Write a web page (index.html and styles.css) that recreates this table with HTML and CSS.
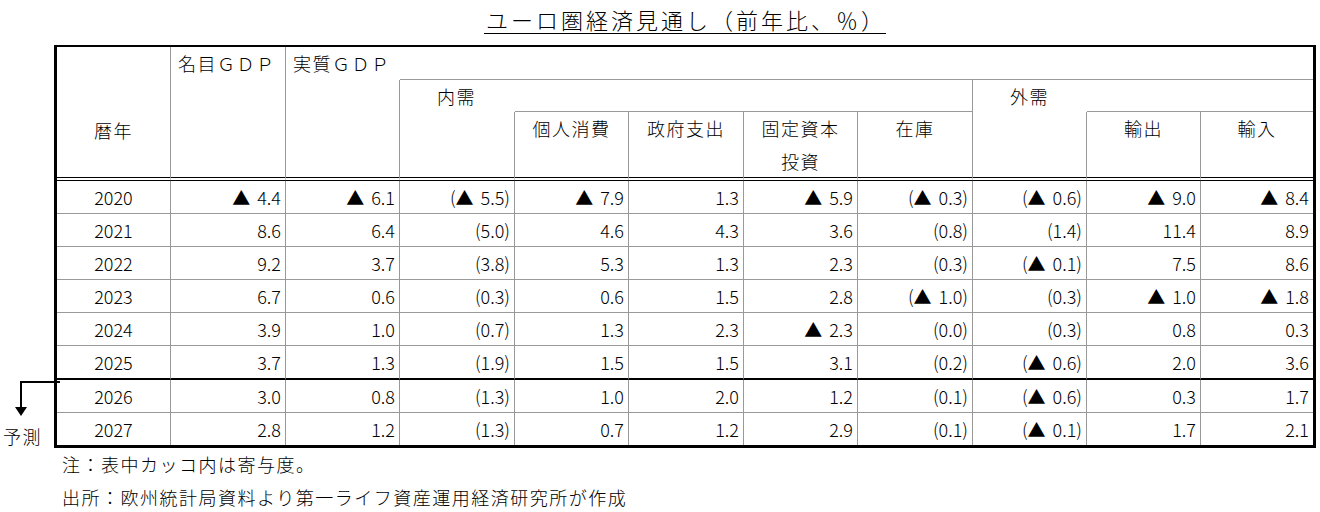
FILE: index.html
```html
<!DOCTYPE html>
<html lang="ja">
<head>
<meta charset="utf-8">
<title>ユーロ圏経済見通し</title>
<link rel="stylesheet" href="styles.css">
</head>
<body>
<div class="sheet">
  <div class="title-row"><h1 class="title">ユーロ圏経済見通し（前年比、％）</h1></div>
  <table class="outlook">
    <colgroup>
      <col class="w114"><col class="w115"><col class="w114"><col class="w115"><col class="w114"><col class="w115"><col class="w114"><col class="w115"><col class="w114"><col class="w114"><col class="w112">
    </colgroup>
    <thead>
      <tr class="r1">
        <th rowspan="3" class="year-head dbl">暦年</th>
        <th rowspan="3" class="top-left dbl">名目ＧＤＰ</th>
        <th class="top-left open">実質ＧＤＰ</th>
        <th colspan="8" class="end"></th>
      </tr>
      <tr class="r2">
        <th rowspan="2" class="dbl"></th>
        <th class="indent open">内需</th>
        <th colspan="4"></th>
        <th class="indent open">外需</th>
        <th colspan="2" class="end"></th>
      </tr>
      <tr class="r3">
        <th class="dbl"></th>
        <th class="dbl">個人消費</th>
        <th class="dbl">政府支出</th>
        <th class="dbl">固定資本<br>投資</th>
        <th class="dbl">在庫</th>
        <th class="dbl"></th>
        <th class="dbl">輸出</th>
        <th class="dbl end">輸入</th>
      </tr>
    </thead>
    <tbody>
      <tr><td class="yr">2020</td><td>▲ 4.4</td><td>▲ 6.1</td><td>(▲ 5.5)</td><td>▲ 7.9</td><td>1.3</td><td>▲ 5.9</td><td>(▲ 0.3)</td><td>(▲ 0.6)</td><td>▲ 9.0</td><td class="end">▲ 8.4</td></tr>
      <tr><td class="yr">2021</td><td>8.6</td><td>6.4</td><td>(5.0)</td><td>4.6</td><td>4.3</td><td>3.6</td><td>(0.8)</td><td>(1.4)</td><td>11.4</td><td class="end">8.9</td></tr>
      <tr><td class="yr">2022</td><td>9.2</td><td>3.7</td><td>(3.8)</td><td>5.3</td><td>1.3</td><td>2.3</td><td>(0.3)</td><td>(▲ 0.1)</td><td>7.5</td><td class="end">8.6</td></tr>
      <tr><td class="yr">2023</td><td>6.7</td><td>0.6</td><td>(0.3)</td><td>0.6</td><td>1.5</td><td>2.8</td><td>(▲ 1.0)</td><td>(0.3)</td><td>▲ 1.0</td><td class="end">▲ 1.8</td></tr>
      <tr><td class="yr">2024</td><td>3.9</td><td>1.0</td><td>(0.7)</td><td>1.3</td><td>2.3</td><td>▲ 2.3</td><td>(0.0)</td><td>(0.3)</td><td>0.8</td><td class="end">0.3</td></tr>
      <tr class="split"><td class="yr">2025</td><td>3.7</td><td>1.3</td><td>(1.9)</td><td>1.5</td><td>1.5</td><td>3.1</td><td>(0.2)</td><td>(▲ 0.6)</td><td>2.0</td><td class="end">3.6</td></tr>
      <tr><td class="yr">2026</td><td>3.0</td><td>0.8</td><td>(1.3)</td><td>1.0</td><td>2.0</td><td>1.2</td><td>(0.1)</td><td>(▲ 0.6)</td><td>0.3</td><td class="end">1.7</td></tr>
      <tr class="last"><td class="yr">2027</td><td>2.8</td><td>1.2</td><td>(1.3)</td><td>0.7</td><td>1.2</td><td>2.9</td><td>(0.1)</td><td>(▲ 0.1)</td><td>1.7</td><td class="end">2.1</td></tr>
    </tbody>
  </table>
  <div class="notes">
    <p>注：表中カッコ内は寄与度。</p>
    <p>出所：欧州統計局資料より第一ライフ資産運用経済研究所が作成</p>
  </div>
  <svg class="forecast-arrow" width="46" height="42" viewBox="0 0 46 42" aria-hidden="true">
    <line x1="6" y1="4" x2="46" y2="4" stroke="#000" stroke-width="2"/>
    <line x1="7" y1="3" x2="7" y2="30" stroke="#000" stroke-width="2"/>
    <polygon points="1,29 13,29 7,38" fill="#000"/>
  </svg>
  <span class="forecast-label">予測</span>
</div>
</body>
</html>
```

FILE: styles.css
```css
body {
  margin: 0;
  background: #fff;
  color: #000;
  font-family: "Noto Sans CJK JP", "Noto Sans", sans-serif;
  font-size: 18px;
  font-weight: 300;
}

.sheet {
  position: relative;
  width: 1262px;
  margin-left: 54px;
}

.title-row {
  height: 45px;
  text-align: center;
}

.title {
  display: inline-block;
  margin: 6px 0 0;
  padding-left: 2px;
  font-size: 22px;
  font-weight: 300;
  line-height: 27px;
  letter-spacing: 3px;
  border-bottom: 1px solid #000;
}

.outlook {
  border-collapse: separate;
  border-spacing: 0;
  table-layout: fixed;
  width: 1262px;
  border: 3px solid #000;
  border-top-width: 2px;
}

.w114 { width: 114px; }
.w115 { width: 115px; }
.w112 { width: 112px; }

.outlook th,
.outlook td {
  padding: 0;
  font-weight: 300;
  line-height: 32px;
  border-right: 1px solid #999;
  border-bottom: 1px solid #999;
  white-space: nowrap;
}

.outlook th {
  text-align: center;
  letter-spacing: 1.5px;
}

.outlook .end { border-right: none; }
.outlook .open { border-right: none; border-bottom: none; }
.outlook .dbl { border-bottom: 4px double #000; }

.r1 th { line-height: 33px; }

.r3 th {
  vertical-align: top;
  line-height: 32.5px;
}

.year-head {
  vertical-align: top;
  padding-top: 67px !important;
}

.top-left {
  vertical-align: top;
  text-align: left !important;
  padding-left: 7px !important;
}

.indent {
  text-align: left !important;
  padding-left: 37px !important;
}

.outlook td {
  text-align: right;
  padding-right: 4px;
  word-spacing: 3px;
}

.outlook td.yr {
  text-align: center;
  padding-right: 0;
}

.split td { border-bottom: 2px solid #000; }
.last td { border-bottom: none; }

.notes {
  margin-left: 8px;
  letter-spacing: 1.5px;
}

.notes p {
  margin: 0;
  line-height: 33px;
}

.forecast-arrow {
  position: absolute;
  left: -40px;
  top: 378px;
}

.forecast-label {
  position: absolute;
  left: -51px;
  top: 420px;
  line-height: 32px;
  letter-spacing: 1.5px;
}
```
